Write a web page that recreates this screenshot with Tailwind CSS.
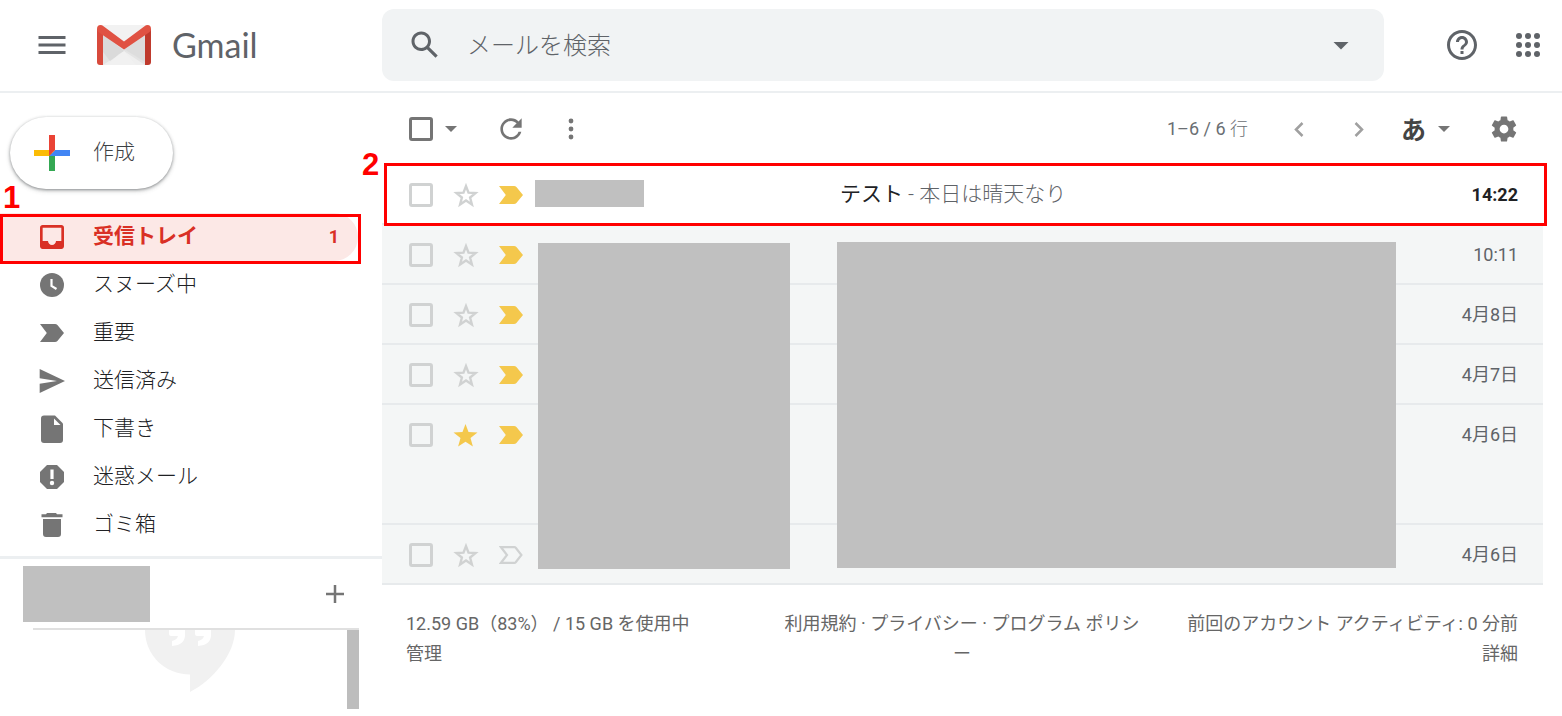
<!DOCTYPE html>
<html lang="ja">
<head>
<meta charset="utf-8">
<title>Gmail</title>
<script src="https://cdn.jsdelivr.net/npm/@tailwindcss/browser@4"></script>
</head>
<body class="min-h-screen bg-white font-['Roboto','Noto_Sans_CJK_JP',sans-serif] text-[#202124]">
<svg class="hidden">
  <symbol id="star" viewBox="0 0 26 25"><path d="M13 3.6l2.5 6.6 7 .4-5.4 4.4 1.8 6.9L13 18l-5.9 3.9 1.8-6.9-5.4-4.4 7-.4z" fill="none" stroke="currentColor" stroke-width="2.4"/></symbol>
  <symbol id="star-full" viewBox="0 0 26 25"><path d="M12.500 1.500l3 8 9 .6-7 5.400 2.400 8.500-7.400-4.800-7.400 4.800 2.400-8.500-7-5.400 9-.6z" fill="currentColor"/></symbol>
  <symbol id="marker" viewBox="0 0 24 18"><path d="M0 0h15q1.500 0 2.400 1L24 9l-6.600 8q-.9 1-2.400 1H0l6.800-9z" fill="currentColor"/></symbol>
  <symbol id="marker-line" viewBox="0 0 24 18"><path d="M2 1.200h13.500q.7 0 1.200.6L22.400 9l-5.700 7.200q-.5.600-1.200.6H2L8 9z" fill="none" stroke="currentColor" stroke-width="2.200"/></symbol>
  <symbol id="caret" viewBox="0 0 10 5"><path d="M0 0h10L5 5z" fill="currentColor"/></symbol>
</svg>

<header class="flex h-[93px] items-center border-b-2 border-[#eceff1] pb-[2px]">
  <div class="flex w-[382px] shrink-0 items-center pl-[34px]">
    <button aria-label="メインメニュー" class="text-[#5f6368]"><svg class="size-9" viewBox="0 0 24 24" fill="currentColor"><path d="M3 18h18v-2H3zm0-5h18v-2H3zm0-7v2h18V6z"/></svg></button>
    <a href="#" class="ml-[27px] flex items-center gap-[21px]">
      <svg class="h-10 w-[54px]" viewBox="0 0 54 40">
        <path d="M3 0h48v40H3z" fill="#e4e4e4"/>
        <path d="M3 0h48L27 21z" fill="#f2f2f2"/>
        <path d="M6 40l21-14 21 14z" fill="#efefef"/>
        <path d="M6 9l21 17-14 10L6 27z" fill="#dadada"/>
        <path d="M22 29l5-3 12 14H10z" fill="#f1f1f1" opacity=".6"/>
        <path d="M27 24L48 9v28z" fill="#d9d9d9" opacity=".6"/>
        <path d="M0 4h6v36H3q-3 0-3-3z" fill="#d84a3c"/>
        <path d="M54 4h-6v36h3q3 0 3-3z" fill="#bf3a2d"/>
        <path d="M0 4q0-4 3.500-4 1.500 0 3 1.200L27 16.500 47.500 1.200Q49 0 50.500 0 54 0 54 4q0 2-2 3.500L27 24.500 2 7.500Q0 6 0 4z" fill="#e05243"/>
      </svg>
      <span class="font-['Lato'] text-[34px] leading-9 text-[#5f6368]">Gmail</span>
    </a>
  </div>
  <form class="flex h-[72px] min-w-0 flex-1 items-center rounded-xl bg-[#f1f3f4] px-[25px] text-[#5f6368]">
    <button type="button" aria-label="検索"><svg class="size-9" viewBox="0 0 24 24" fill="currentColor"><path d="M20.490 19l-5.730-5.730C15.530 12.200 16 10.910 16 9.500 16 5.910 13.090 3 9.500 3S3 5.910 3 9.500 5.910 16 9.500 16c1.410 0 2.700-.47 3.770-1.240L19 20.490zM5 9.500C5 7.010 7.010 5 9.500 5S14 7.010 14 9.500 11.990 14 9.500 14 5 11.990 5 9.500z"/></svg></button>
    <input type="text" aria-label="メールを検索" placeholder="メールを検索" class="ml-6 min-w-0 flex-1 bg-transparent pt-[2px] text-2xl font-light outline-none placeholder:text-[#5f6368]">
    <button type="button" aria-label="検索オプション"><svg class="size-9" viewBox="0 0 24 24" fill="currentColor"><path d="M7 10l5 5 5-5z"/></svg></button>
  </form>
  <div class="flex w-[178px] shrink-0 items-center justify-end gap-[30px] pr-4 text-[#5f6368]">
    <button aria-label="ヘルプ"><svg class="size-9" viewBox="0 0 24 24" fill="currentColor"><path d="M11 18h2v-2h-2zm1-16C6.480 2 2 6.480 2 12s4.480 10 10 10 10-4.480 10-10S17.520 2 12 2zm0 18c-4.410 0-8-3.590-8-8s3.590-8 8-8 8 3.590 8 8-3.590 8-8 8zm0-14c-2.210 0-4 1.790-4 4h2c0-1.100.9-2 2-2s2 .9 2 2c0 2-3 1.750-3 5h2c0-2.250 3-2.500 3-5 0-2.210-1.790-4-4-4z"/></svg></button>
    <button aria-label="Google アプリ"><svg class="size-9" viewBox="0 0 24 24" fill="currentColor"><circle cx="6" cy="6" r="2"/><circle cx="12" cy="6" r="2"/><circle cx="18" cy="6" r="2"/><circle cx="6" cy="12" r="2"/><circle cx="12" cy="12" r="2"/><circle cx="18" cy="12" r="2"/><circle cx="6" cy="18" r="2"/><circle cx="12" cy="18" r="2"/><circle cx="18" cy="18" r="2"/></svg></button>
  </div>
</header>

<div class="flex">
  <aside class="w-[382px] shrink-0 pt-6">
    <button class="ml-[10px] flex h-[72px] w-[163px] items-center gap-[14px] rounded-full bg-white pl-[15px] text-[21px] font-light text-[#3c4043] shadow-[0_1px_3px_rgba(60,64,67,0.5),0_2px_5px_rgba(60,64,67,0.2)]">
      <svg class="size-[54px]" viewBox="0 0 36 36"><path fill="#34A853" d="M16 16v14h4V20z"/><path fill="#4285F4" d="M30 16H20l-4 4h14z"/><path fill="#FBBC05" d="M6 16v4h10l4-4z"/><path fill="#EA4335" d="M20 16V6h-4v14z"/></svg>
      <span>作成</span>
    </button>
    <nav class="relative mt-6 flex flex-col text-[21px] font-light [&_a]:flex [&_a]:h-12 [&_a]:items-center [&_a]:gap-7 [&_a]:pl-[39px] [&_svg]:w-[26px] [&_svg]:text-[#757575]">
      <a href="#" class="mr-6 rounded-r-full bg-[#fce8e6] pr-[19px] font-bold text-[#d93025]">
        <svg class="h-6 text-[#d93025]!" viewBox="3 3 18 18" fill="currentColor"><path d="M19 3H4.990c-1.110 0-1.980.89-1.980 2L3 19c0 1.100.88 2 1.990 2H19c1.100 0 2-.9 2-2V5c0-1.110-.9-2-2-2zm0 12h-4c0 1.660-1.350 3-3 3s-3-1.340-3-3H4.990V5H19z"/></svg>
        <span class="flex-1">受信トレイ</span><span class="text-lg">1</span></a>
      <a href="#"><svg class="h-6" viewBox="0 0 24 24"><circle cx="12" cy="12" r="12" fill="currentColor"/><path d="M11.500 6v7l5 3" fill="none" stroke="#fff" stroke-width="2.200"/></svg><span>スヌーズ中</span></a>
      <a href="#"><svg class="h-[18px]"><use href="#marker"/></svg><span>重要</span></a>
      <a href="#"><svg class="h-6" viewBox="1.500 3 19.500 18" fill="currentColor"><path d="M2.010 21L21 12 2.010 3 2 10l13 2-13 2z"/></svg><span>送信済み</span></a>
      <a href="#"><svg class="h-7" viewBox="0 0 22 28"><path d="M3 .5h11L22 8.500V25q0 3-3 3H3q-3 0-3-3V3.500Q0 .5 3 .5z" fill="currentColor"/><path d="M13 3.500V10h6.500z" fill="#fff"/></svg><span>下書き</span></a>
      <a href="#"><svg class="h-6" viewBox="0 0 24 24"><path d="M7 0h10l7 7v10l-7 7H7l-7-7V7z" fill="currentColor"/><path d="M10.400 4.500h3.200V14h-3.200z" fill="#fff"/><circle cx="12" cy="18" r="2.200" fill="#fff"/></svg><span>迷惑メール</span></a>
      <a href="#"><svg class="h-6" viewBox="0 0 24 24" fill="currentColor"><path d="M7 0h9l1 1.300h5.500v3h-21v-3H6zM3 6h18v15q0 3-3 3H6q-3 0-3-3z"/></svg><span>ゴミ箱</span></a>
      <div class="absolute top-px right-[21px] left-0 h-[50px] border-3 border-[#ff0000]"></div>
      <strong class="absolute -top-[31px] left-[3px] font-['Liberation_Sans'] text-[31px] leading-8 font-bold text-[#ff0000]">1</strong>
    </nav>
    <div class="mt-[7px] flex items-center justify-between border-t-3 border-[#eceff1] pt-[7px] pr-[38px] pl-[23px]">
      <div class="h-14 w-[127px] bg-[#c0c0c0]"></div>
      <button aria-label="チャットを開始" class="text-[#757575]"><svg class="size-[18px]" viewBox="0 0 18 18"><path d="M9 0v18M0 9h18" stroke="currentColor" stroke-width="2.500"/></svg></button>
    </div>
    <div class="mt-[6px] mr-[23px] ml-[33px] flex h-[81px] justify-between border-t-2 border-[#e0e0e0]">
      <svg class="ml-28 h-[62px] w-[90px]" viewBox="0 0 90 62"><path d="M0 0h90c0 24-22 50-45 62V44.500C20 44.500 0 25 0 0z" fill="#f1f1f1"/><path d="M24 0h16v5q0 10-13 11v-5q5-1 6-5h-7q-2 0-2-2zM50 0h16v5q0 10-13 11v-5q5-1 6-5h-7q-2 0-2-2z" fill="#fff"/></svg>
      <div class="w-3 bg-[#bdbdbd]"></div>
    </div>
  </aside>

  <main class="min-w-0 flex-1 pr-[19px]">
    <div class="flex h-[72px] items-center pr-6 pl-[27px] text-[#757575]">
      <input type="checkbox" aria-label="すべて選択" class="size-6 appearance-none rounded-[3px] border-3 border-[#757575]">
      <button aria-label="選択" class="ml-3"><svg class="h-[6px] w-3"><use href="#caret"/></svg></button>
      <button aria-label="更新" class="ml-[38px]"><svg class="size-8" viewBox="0 0 24 24" fill="currentColor"><path d="M17.650 6.350C16.200 4.900 14.210 4 12 4c-4.420 0-7.990 3.580-7.990 8s3.570 8 7.990 8c3.730 0 6.840-2.550 7.730-6h-2.080c-.82 2.330-3.040 4-5.650 4-3.310 0-6-2.690-6-6s2.690-6 6-6c1.660 0 3.140.69 4.220 1.780L13 11h7V4z"/></svg></button>
      <button aria-label="その他" class="ml-[41px]"><svg class="h-[22px] w-[6px]" viewBox="0 0 6 22" fill="currentColor"><circle cx="3" cy="3" r="2.400"/><circle cx="3" cy="11" r="2.400"/><circle cx="3" cy="19" r="2.400"/></svg></button>
      <span class="ml-auto text-lg text-[#6a6e73]">1–6 / 6 <span class="font-light">行</span></span>
      <button aria-label="前へ" class="ml-[46px] text-[#a0a0a0]"><svg class="h-[15px] w-[10px]" viewBox="0 0 10 15"><path d="M8.500 1L2 7.500 8.500 14" fill="none" stroke="currentColor" stroke-width="2.500"/></svg></button>
      <button aria-label="次へ" class="ml-[50px] text-[#a0a0a0]"><svg class="h-[15px] w-[10px]" viewBox="0 0 10 15"><path d="M1.500 1L8 7.500 1.500 14" fill="none" stroke="currentColor" stroke-width="2.500"/></svg></button>
      <button aria-label="入力ツール" class="ml-[37px] flex items-center gap-3"><span class="pt-1 text-[25px] leading-8 font-bold text-[#444]">あ</span><svg class="h-[6px] w-3"><use href="#caret"/></svg></button>
      <button aria-label="設定" class="ml-[39px]"><svg class="size-[30px]" viewBox="0 0 24 24" fill="currentColor"><path d="M19.430 12.980c.04-.32.07-.64.07-.98s-.03-.66-.07-.98l2.110-1.650c.19-.15.24-.42.12-.64l-2-3.460c-.12-.22-.39-.3-.61-.22l-2.490 1c-.52-.4-1.080-.73-1.690-.98l-.38-2.650C14.460 2.180 14.250 2 14 2h-4c-.25 0-.46.18-.49.42l-.38 2.650c-.61.25-1.170.59-1.690.98l-2.490-1c-.23-.09-.49 0-.61.22l-2 3.460c-.13.22-.07.49.12.64l2.110 1.650c-.04.32-.07.65-.07.98s.03.66.07.98l-2.110 1.650c-.19.15-.24.42-.12.64l2 3.460c.12.22.39.3.61.22l2.490-1c.52.4 1.080.73 1.690.98l.38 2.650c.03.24.24.42.49.42h4c.25 0 .46-.18.49-.42l.38-2.650c.61-.25 1.170-.59 1.690-.98l2.490 1c.23.09.49 0 .61-.22l2-3.460c.12-.22.07-.49-.12-.64zM12 15.500c-1.930 0-3.500-1.570-3.500-3.500s1.570-3.500 3.500-3.500 3.500 1.570 3.500 3.500-1.570 3.500-3.500 3.500z"/></svg></button>
    </div>

    <div class="relative">
      <ul class="text-lg text-[#5f6368] [&_input]:size-6 [&_input]:appearance-none [&_input]:rounded-[3px] [&_input]:border-3 [&_input]:border-[#d0d2d2] [&_li]:flex [&_li]:border-b-2 [&_li]:border-[#e7eaec] [&_li]:bg-[#f4f6f6] [&_li]:pr-[25px] [&_li]:pl-[27px] [&_.line]:flex [&_.line]:h-[58px] [&_.line]:flex-1 [&_.line]:items-center [&_.line]:pt-[2px] [&_.star]:ml-5 [&_.star]:h-[26px] [&_.star]:w-[26px] [&_.star]:text-[#d0d2d2] [&_.mark]:ml-5 [&_.mark]:h-[18px] [&_.mark]:w-6 [&_.mark]:text-[#f4c84c] [&_time]:ml-auto [&_button>svg]:size-full">
        <li class="bg-white!"><div class="line"><input type="checkbox" aria-label="テスト"><button class="star" aria-label="スター"><svg><use href="#star"/></svg></button><button class="mark" aria-label="重要"><svg><use href="#marker"/></svg></button><div class="mb-1 ml-3 h-[27px] w-[109px] bg-[#c0c0c0]"></div><a href="#" class="ml-[196px] pb-[2px] text-[21px] font-light"><b class="text-[#202124]">テスト</b> - 本日は晴天なり</a><time class="font-bold text-[#202124]">14:22</time></div></li>
        <li><div class="line"><input type="checkbox" aria-label="メール 2"><button class="star" aria-label="スター"><svg><use href="#star"/></svg></button><button class="mark" aria-label="重要"><svg><use href="#marker"/></svg></button><time>10:11</time></div></li>
        <li><div class="line"><input type="checkbox" aria-label="メール 3"><button class="star" aria-label="スター"><svg><use href="#star"/></svg></button><button class="mark" aria-label="重要"><svg><use href="#marker"/></svg></button><time>4月8日</time></div></li>
        <li><div class="line"><input type="checkbox" aria-label="メール 4"><button class="star" aria-label="スター"><svg><use href="#star"/></svg></button><button class="mark" aria-label="重要"><svg><use href="#marker"/></svg></button><time>4月7日</time></div></li>
        <li class="pb-[60px]"><div class="line"><input type="checkbox" aria-label="メール 5"><button class="star text-[#f4c84c]!" aria-label="スター付き"><svg><use href="#star-full"/></svg></button><button class="mark" aria-label="重要"><svg><use href="#marker"/></svg></button><time>4月6日</time></div></li>
        <li><div class="line"><input type="checkbox" aria-label="メール 6"><button class="star" aria-label="スター"><svg><use href="#star"/></svg></button><button class="mark text-[#d0d2d2]!" aria-label="重要でない"><svg><use href="#marker-line"/></svg></button><time>4月6日</time></div></li>
      </ul>
      <div class="absolute top-[78px] left-[156px] h-[326px] w-[252px] bg-[#c0c0c0]"></div>
      <div class="absolute top-[77px] right-[147px] left-[455px] h-[326px] bg-[#c0c0c0]"></div>
      <div class="absolute -top-[2px] -right-1 left-[2px] h-[63px] border-3 border-[#ff0000]"></div>
      <strong class="absolute -top-4 -left-5 font-['Liberation_Sans'] text-[31px] leading-8 font-bold text-[#ff0000]">2</strong>
    </div>

    <footer class="grid grid-cols-3 pt-6 pr-[25px] pl-6 text-lg leading-[30px] text-[#666]">
      <div>12.59 GB（83%） / 15 GB を使用中<br><a href="#">管理</a></div>
      <div class="text-center"><a href="#">利用規約</a> · <a href="#">プライバシー</a> · <a href="#">プログラム ポリシー</a></div>
      <div class="text-right whitespace-nowrap">前回のアカウント アクティビティ: 0 分前<br><a href="#">詳細</a></div>
    </footer>
  </main>
</div>
</body>
</html>
